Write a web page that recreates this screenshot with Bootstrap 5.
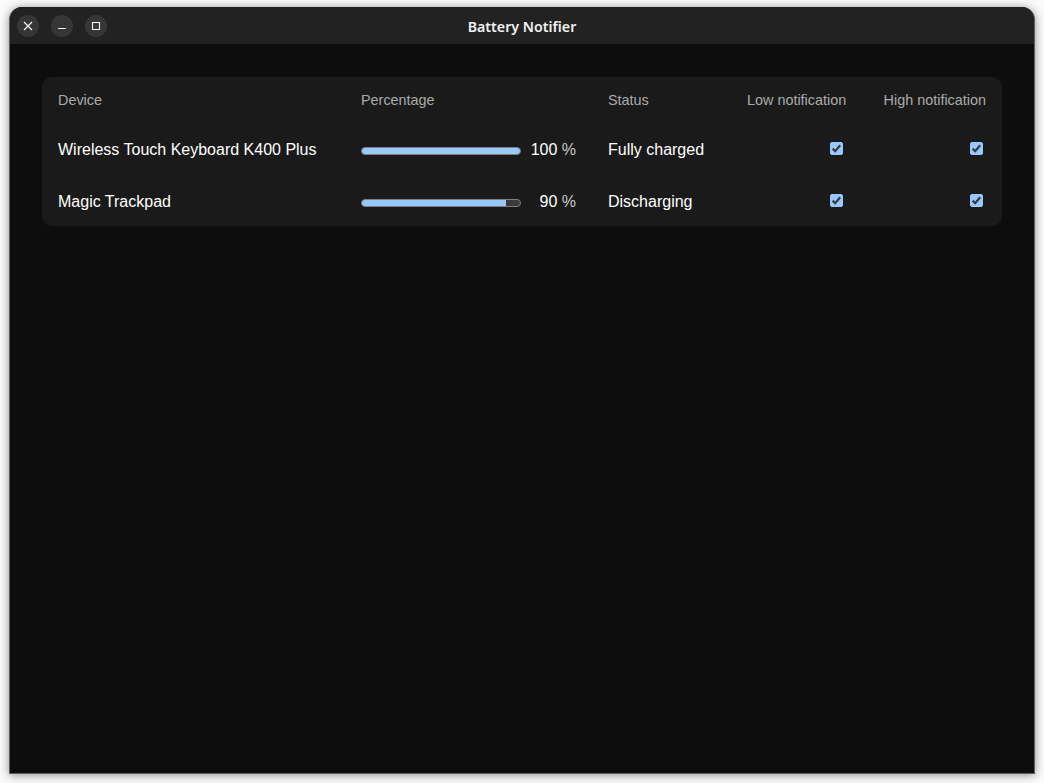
<!DOCTYPE html>
<html lang="en">
<head>
  <meta charset="UTF-8" />
  <meta name="viewport" content="width=device-width, initial-scale=1.0"/>
  <title>Battery Notifier</title>
  <link href="https://cdn.jsdelivr.net/npm/bootstrap@5.3.3/dist/css/bootstrap.min.css" rel="stylesheet"/>
  <style>
    html, body { height: 100%; }
    body {
      background-color: #fafafa;
      font-family: "Liberation Sans", Arial, sans-serif;
      padding: 7px 9px 9px 9px;
      overflow: hidden;
    }
    .app-window {
      height: 767px;
      background-color: #0d0d0d;
      border: 1px solid #5e5e5e;
      border-top: 0;
      border-radius: 13px 13px 0 0;
      box-shadow: 0 1px 10px rgba(0, 0, 0, .45);
      overflow: hidden;
    }
    .titlebar {
      height: 37px;
      background-color: #222222;
      padding-left: 7px;
    }
    .title-text {
      color: #f2f2f2;
      font-family: "Noto Sans", sans-serif;
      font-size: 14.2px;
      font-weight: 600;
      left: 0;
      right: 0;
      text-align: center;
      top: 9px;
    }
    .win-btn {
      width: 22px;
      height: 22px;
      background-color: #363636;
      border: 0;
      border-radius: 50%;
      margin-right: 12px;
      padding: 0;
    }
    .content { padding: 33px 32px; }
    .device-card {
      background-color: #1a1a1a;
      border-radius: 10px;
      height: 149px;
      overflow: hidden;
    }
    .device-table {
      --bs-table-bg: transparent;
      --bs-table-color: #ffffff;
      table-layout: fixed;
      margin: 0;
    }
    .device-table th {
      color: #ababab;
      font-size: 14.4px;
      font-weight: 400;
      height: 46px;
      padding: 2px 16px 0;
      vertical-align: middle;
      white-space: nowrap;
    }
    .device-table td {
      font-size: 16px;
      height: 52px;
      padding: 2px 16px 0;
      vertical-align: middle;
    }
    .battery-bar {
      width: 160px;
      height: 8px;
      background-color: #3a3a3a;
      border: 1px solid #808080;
      border-radius: 4px;
      margin-top: 2px;
    }
    .battery-bar .progress-bar { background-color: #99c8ff; }
    .pct { width: 55px; text-align: right; }
    .pct span { color: #c9c9c9; }
    .form-check-input[type=checkbox].check-box {
      display: block;
      width: 13px;
      height: 13px;
      background-color: #99c8ff;
      border-color: #99c8ff;
      border-radius: 2px;
      margin: 0 3px 4px auto;
      float: none;
      background-image: url("data:image/svg+xml,%3csvg xmlns='http://www.w3.org/2000/svg' viewBox='0 0 13 13'%3e%3cpath fill='none' stroke='%233a3a3a' stroke-width='2.2' d='M2.6 6.6 5.2 9.2 10.2 3.2'/%3e%3c/svg%3e");
      background-size: 13px 13px;
    }
  </style>
</head>
<body>
  <div class="app-window">
    <div class="titlebar d-flex align-items-center position-relative">
      <button class="win-btn d-flex align-items-center justify-content-center" aria-label="Close">
        <svg width="10" height="10" viewBox="0 0 10 10"><path d="M1 1 9 9M9 1 1 9" stroke="#f0f0f0" stroke-width="1.3" fill="none"/></svg>
      </button>
      <button class="win-btn d-flex align-items-center justify-content-center" aria-label="Minimize">
        <svg width="10" height="10" viewBox="0 0 10 10"><path d="M1 7.5H9" stroke="#f0f0f0" stroke-width="1.2" fill="none"/></svg>
      </button>
      <button class="win-btn d-flex align-items-center justify-content-center" aria-label="Maximize">
        <svg width="10" height="10" viewBox="0 0 10 10"><rect x="1.5" y="1.5" width="7" height="7" stroke="#f0f0f0" stroke-width="1.1" fill="none"/></svg>
      </button>
      <div class="title-text position-absolute">Battery Notifier</div>
    </div>
    <div class="content">
      <div class="device-card">
        <table class="table table-borderless device-table">
          <colgroup>
            <col style="width: 303px"><col style="width: 247px"><col style="width: 139px"><col style="width: 131px"><col style="width: 140px">
          </colgroup>
          <thead>
            <tr>
              <th>Device</th>
              <th>Percentage</th>
              <th>Status</th>
              <th class="text-end">Low notification</th>
              <th class="text-end">High notification</th>
            </tr>
          </thead>
          <tbody>
            <tr>
              <td>Wireless Touch Keyboard K400 Plus</td>
              <td>
                <div class="d-flex align-items-center">
                  <div class="progress battery-bar"><div class="progress-bar" style="width: 100%"></div></div>
                  <div class="pct">100 <span>%</span></div>
                </div>
              </td>
              <td>Fully charged</td>
              <td><input class="form-check-input check-box" type="checkbox" checked aria-label="Low notification"></td>
              <td><input class="form-check-input check-box" type="checkbox" checked aria-label="High notification"></td>
            </tr>
            <tr>
              <td>Magic Trackpad</td>
              <td>
                <div class="d-flex align-items-center">
                  <div class="progress battery-bar"><div class="progress-bar" style="width: 91%"></div></div>
                  <div class="pct">90 <span>%</span></div>
                </div>
              </td>
              <td>Discharging</td>
              <td><input class="form-check-input check-box" type="checkbox" checked aria-label="Low notification"></td>
              <td><input class="form-check-input check-box" type="checkbox" checked aria-label="High notification"></td>
            </tr>
          </tbody>
        </table>
      </div>
    </div>
  </div>
  <script src="https://cdn.jsdelivr.net/npm/bootstrap@5.3.3/dist/js/bootstrap.bundle.min.js"></script>
</body>
</html>
